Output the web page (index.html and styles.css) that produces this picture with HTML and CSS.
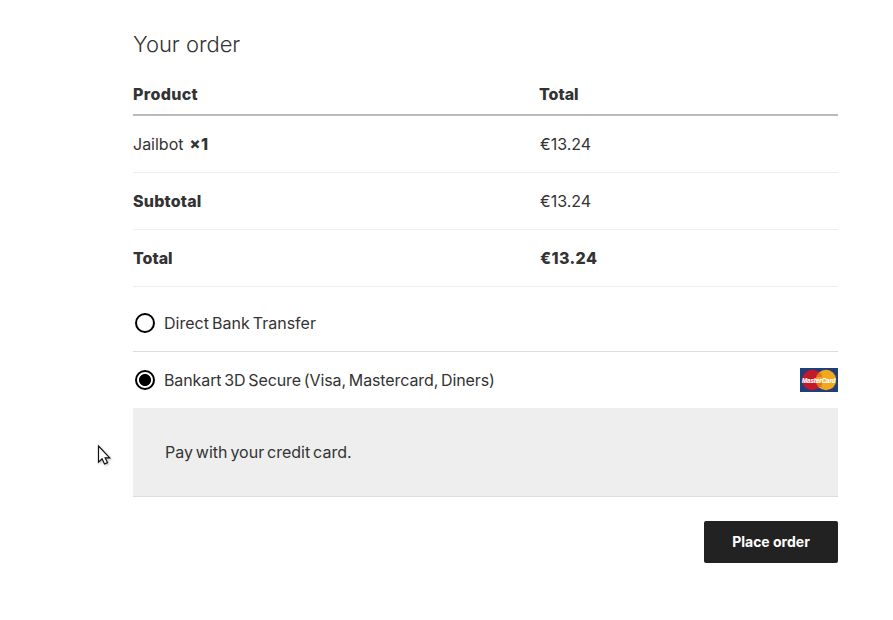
FILE: index.html
```html
<!DOCTYPE html>
<html lang="en">
<head>
<meta charset="utf-8">
<title>Checkout</title>
<link rel="stylesheet" href="styles.css">
</head>
<body>
<main class="checkout">
  <h3 class="title">Your order</h3>
  <div class="order">
    <div class="row head"><span class="product-head">Product</span><span class="total-head">Total</span></div>
    <div class="row"><span class="item"><span class="name">Jailbot</span><strong class="qty">× 1</strong></span><span class="price">€13.24</span></div>
    <div class="row"><strong class="subtotal">Subtotal</strong><span class="price">€13.24</span></div>
    <div class="row"><strong class="total">Total</strong><strong class="price strong">€13.24</strong></div>
  </div>
  <div class="methods">
    <label class="method direct"><span class="radio"></span><span class="direct-label">Direct Bank Transfer</span></label>
    <label class="method card"><span class="radio checked"></span><span class="card-label">Bankart 3D Secure (Visa, Mastercard, Diners)</span>
      <svg class="logo" width="38" height="24" viewBox="0 0 38 24">
        <rect width="38" height="24" fill="#213e78"/>
        <circle cx="12.3" cy="12" r="10.2" fill="#c41a28"/>
        <circle cx="26" cy="12" r="10.2" fill="#f0a91f"/>
        <path d="M17 6h4.5M16.5 8h5.5M16.5 16h5.5M17 18h4.5" stroke="#d9402a" stroke-width="1"/>
        <text class="logo-text" x="2" y="14.8" textLength="33.5" lengthAdjust="spacingAndGlyphs">MasterCard</text>
      </svg>
    </label>
    <div class="panel"><p class="hint">Pay with your credit card.</p></div>
  </div>
  <button class="place"><span>Place order</span></button>
</main>
<svg class="pointer" width="18" height="24" viewBox="0 0 18 24">
  <path d="M2.5 2v16.2l3.6-3.4 2.4 5.2 3-1.4-2.4-4.8h4.6z" fill="#fff" stroke="#111" stroke-width="1.2"/>
</svg>
</body>
</html>
```
FILE: styles.css
```css
* { box-sizing: border-box; }
body {
  margin: 0;
  background: #fff;
  color: #333;
  font: 400 16px/24px Inter, "Liberation Sans", sans-serif;
  white-space: nowrap;
}
.checkout {
  width: 705px;
  margin-left: 133px;
  padding-top: 28px;
  display: flex;
  flex-direction: column;
}
.title { margin: 0; height: 45px; font-weight: 300; font-size: 22px; line-height: 32px; letter-spacing: -0.03px; }
.row {
  display: grid;
  grid-template-columns: 407px 1fr;
  align-items: center;
  height: 57px;
  border-bottom: 1px solid #eee;
}
.row > * { justify-self: start; }
.head { height: 43px; border-bottom: 2px solid #bbb; font-weight: 800; }
.product-head { letter-spacing: 0.35px; }
.total-head { margin-left: -1px; }
strong { font-weight: 800; }
.subtotal { letter-spacing: 0.2px; }
.strong { letter-spacing: 0.4px; }
.item { display: flex; gap: 6px; }
.qty { word-spacing: -3px; }
.methods { margin-top: 8px; }
.method { display: flex; align-items: center; height: 57px; }
.direct { border-bottom: 1px solid #ddd; }
.card { height: 56px; }
.direct-label { word-spacing: -1.4px; }
.card-label { word-spacing: -1.6px; letter-spacing: -0.1px; }
.radio {
  width: 20px;
  height: 20px;
  margin: 0 9px 0 2px;
  border: 2px solid #000;
  border-radius: 50%;
}
.checked { background: radial-gradient(circle, #000 5.6px, #fff 6.4px); }
.logo { margin-left: auto; overflow: visible; }
.logo-text {
  font: italic 700 7.5px "Liberation Sans", sans-serif;
  fill: #fff;
  stroke: #fff;
  stroke-width: 0.2px;
}
.panel { height: 89px; padding: 32px; background: #eee; border-bottom: 1px solid #ddd; }
.hint { margin: 0; width: max-content; word-spacing: -1.6px; }
.place {
  align-self: flex-end;
  width: 134px;
  height: 42px;
  margin-top: 24px;
  padding: 0;
  border: 0;
  border-radius: 2px;
  background: #222;
  color: #fff;
  font: 700 14px/20px Inter, "Liberation Sans", sans-serif;
}
.pointer { position: absolute; left: 96px; top: 444px; filter: drop-shadow(1px 1px 1px #0004); }
```
